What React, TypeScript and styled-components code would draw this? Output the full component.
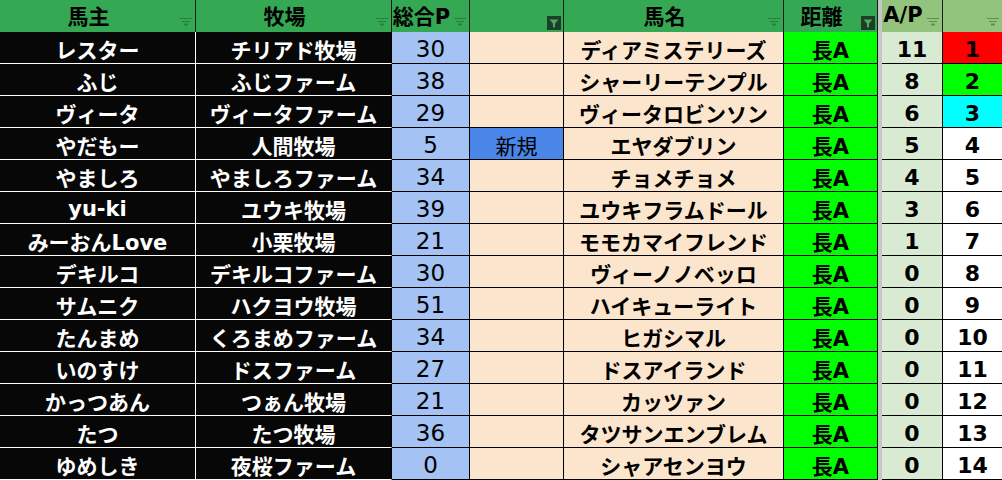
import React from "react";
import styled, { createGlobalStyle, css } from "styled-components";

const GlobalStyle = createGlobalStyle`
  html, body { margin: 0; padding: 0; background: #ffffff; }
  body { font-family: "DejaVu Sans", "Noto Sans CJK JP", sans-serif; }
`;

const COLS = "196px 196px 78px 94px 220px 94px 4px 61px 59px";
const GRAY = "#c6c6c6";
const FONT = `"DejaVu Sans", "Noto Sans CJK JP", sans-serif`;

const Sheet = styled.div`
  width: 1002px;
  height: 480px;
  overflow: hidden;
  display: flex;
  flex-direction: column;
  background: ${GRAY};
`;

const HeaderRow = styled.div`
  display: grid;
  grid-template-columns: ${COLS};
  height: 29px;
`;

const HeaderCell = styled.div<{ $light?: boolean; $last?: boolean }>`
  position: relative;
  display: flex;
  align-items: center;
  justify-content: center;
  padding: 0 18px 2px 0;
  background: ${(p) => (p.$light ? "#93c47d" : "#34a853")};
  border-right: ${(p) => (p.$last ? "none" : "1px solid #1c1c1c")};
  color: #000;
  font-family: ${FONT};
  font-size: 21px;
  font-weight: 700;
  white-space: nowrap;
  overflow: visible;
`;

const FilterSpot = styled.span`
  position: absolute;
  right: 2px;
  bottom: 2px;
  width: 14px;
  height: 14px;
  display: flex;
`;

const Band = styled.div`
  height: 4px;
  background: ${GRAY};
`;

const BodyRow = styled.div`
  display: grid;
  grid-template-columns: ${COLS};
  height: 32px;
  flex: none;
`;

type Tone =
  | "dark"
  | "blue"
  | "peach"
  | "fresh"
  | "lime"
  | "sage"
  | "red"
  | "cyan"
  | "white";

const toneBg: Record<Tone, string> = {
  dark: "#070707",
  blue: "#a4c2f4",
  peach: "#fce5cd",
  fresh: "#4a86e8",
  lime: "#00ff00",
  sage: "#d9ead3",
  red: "#ff0000",
  cyan: "#00ffff",
  white: "#ffffff",
};

const Cell = styled.div<{ $tone: Tone; $thin?: boolean; $last?: boolean; $size?: number }>`
  display: flex;
  align-items: center;
  justify-content: center;
  padding-top: 3px;
  box-sizing: border-box;
  background: ${(p) => toneBg[p.$tone]};
  color: ${(p) => (p.$tone === "dark" ? "#ffffff" : "#000000")};
  font-family: ${FONT};
  font-size: ${(p) => p.$size ?? 21}px;
  font-weight: ${(p) => (p.$thin ? 400 : 700)};
  white-space: nowrap;
  overflow: hidden;
  ${(p) =>
    p.$tone === "dark"
      ? css`
          border-bottom: 1px solid #ffffff;
          border-right: 1px solid #ffffff;
        `
      : css`
          border-bottom: 1px solid #000000;
          border-right: ${p.$last ? "none" : "1px solid #000000"};
        `}
`;

const DarkEdge = styled(Cell)`
  border-right: 1px solid #000000;
`;

const Separator = styled.div`
  background: ${GRAY};
`;

const FilterIcon = ({ light }: { light?: boolean }) => (
  <svg width="14" height="14" viewBox="0 0 14 14">
    <g fill={light ? "#5d8f4c" : "#2a7c42"}>
      <rect x="1" y="2" width="12" height="1" />
      <rect x="3" y="5" width="8" height="1" />
      <rect x="5" y="7.5" width="4" height="2" />
    </g>
  </svg>
);

const ActiveFilterIcon = () => (
  <svg width="14" height="14" viewBox="0 0 14 14">
    <rect x="0" y="0" width="14" height="14" fill="#1b3f27" />
    <path d="M2.5 3.5 H11.5 L8 7.5 V11.5 H6 V7.5 Z" fill="#4fa865" />
  </svg>
);

type Row = {
  owner: string;
  farm: string;
  total: number;
  note?: string;
  horse: string;
  ap: number;
  rank: number;
};

const rows: Row[] = [
  { owner: "レスター", farm: "チリアド牧場", total: 30, horse: "ディアミステリーズ", ap: 11, rank: 1 },
  { owner: "ふじ", farm: "ふじファーム", total: 38, horse: "シャーリーテンプル", ap: 8, rank: 2 },
  { owner: "ヴィータ", farm: "ヴィータファーム", total: 29, horse: "ヴィータロビンソン", ap: 6, rank: 3 },
  { owner: "やだもー", farm: "人間牧場", total: 5, note: "新規", horse: "エヤダブリン", ap: 5, rank: 4 },
  { owner: "やましろ", farm: "やましろファーム", total: 34, horse: "チョメチョメ", ap: 4, rank: 5 },
  { owner: "yu-ki", farm: "ユウキ牧場", total: 39, horse: "ユウキフラムドール", ap: 3, rank: 6 },
  { owner: "みーおんLove", farm: "小栗牧場", total: 21, horse: "モモカマイフレンド", ap: 1, rank: 7 },
  { owner: "デキルコ", farm: "デキルコファーム", total: 30, horse: "ヴィーノノベッロ", ap: 0, rank: 8 },
  { owner: "サムニク", farm: "ハクヨウ牧場", total: 51, horse: "ハイキューライト", ap: 0, rank: 9 },
  { owner: "たんまめ", farm: "くろまめファーム", total: 34, horse: "ヒガシマル", ap: 0, rank: 10 },
  { owner: "いのすけ", farm: "ドスファーム", total: 27, horse: "ドスアイランド", ap: 0, rank: 11 },
  { owner: "かっつあん", farm: "つぁん牧場", total: 21, horse: "カッツァン", ap: 0, rank: 12 },
  { owner: "たつ", farm: "たつ牧場", total: 36, horse: "タツサンエンブレム", ap: 0, rank: 13 },
  { owner: "ゆめしき", farm: "夜桜ファーム", total: 0, horse: "シャアセンヨウ", ap: 0, rank: 14 },
];

const rankTone = (r: number): Tone =>
  r === 1 ? "red" : r === 2 ? "lime" : r === 3 ? "cyan" : "white";

export default function App() {
  return (
    <>
      <GlobalStyle />
      <Sheet>
        <HeaderRow>
          <HeaderCell>
            馬主
            <FilterSpot><FilterIcon /></FilterSpot>
          </HeaderCell>
          <HeaderCell>
            牧場
            <FilterSpot><FilterIcon /></FilterSpot>
          </HeaderCell>
          <HeaderCell>
            総合P
            <FilterSpot><FilterIcon /></FilterSpot>
          </HeaderCell>
          <HeaderCell>
            <FilterSpot><ActiveFilterIcon /></FilterSpot>
          </HeaderCell>
          <HeaderCell>
            馬名
            <FilterSpot><FilterIcon /></FilterSpot>
          </HeaderCell>
          <HeaderCell>
            距離
            <FilterSpot><ActiveFilterIcon /></FilterSpot>
          </HeaderCell>
          <Separator />
          <HeaderCell $light>
            A/P
            <FilterSpot><FilterIcon light /></FilterSpot>
          </HeaderCell>
          <HeaderCell $light $last>
            <FilterSpot><FilterIcon light /></FilterSpot>
          </HeaderCell>
        </HeaderRow>
        <Band />
        {rows.map((r) => (
          <BodyRow key={r.rank}>
            <Cell $tone="dark">{r.owner}</Cell>
            <DarkEdge $tone="dark">{r.farm}</DarkEdge>
            <Cell $tone="blue" $thin $size={23}>{r.total}</Cell>
            <Cell $tone={r.note ? "fresh" : "peach"} $thin>{r.note ?? ""}</Cell>
            <Cell $tone="peach">{r.horse}</Cell>
            <Cell $tone="lime">長A</Cell>
            <Separator />
            <Cell $tone="sage" $size={22}>{r.ap}</Cell>
            <Cell $tone={rankTone(r.rank)} $last $size={22}>{r.rank}</Cell>
          </BodyRow>
        ))}
      </Sheet>
    </>
  );
}
